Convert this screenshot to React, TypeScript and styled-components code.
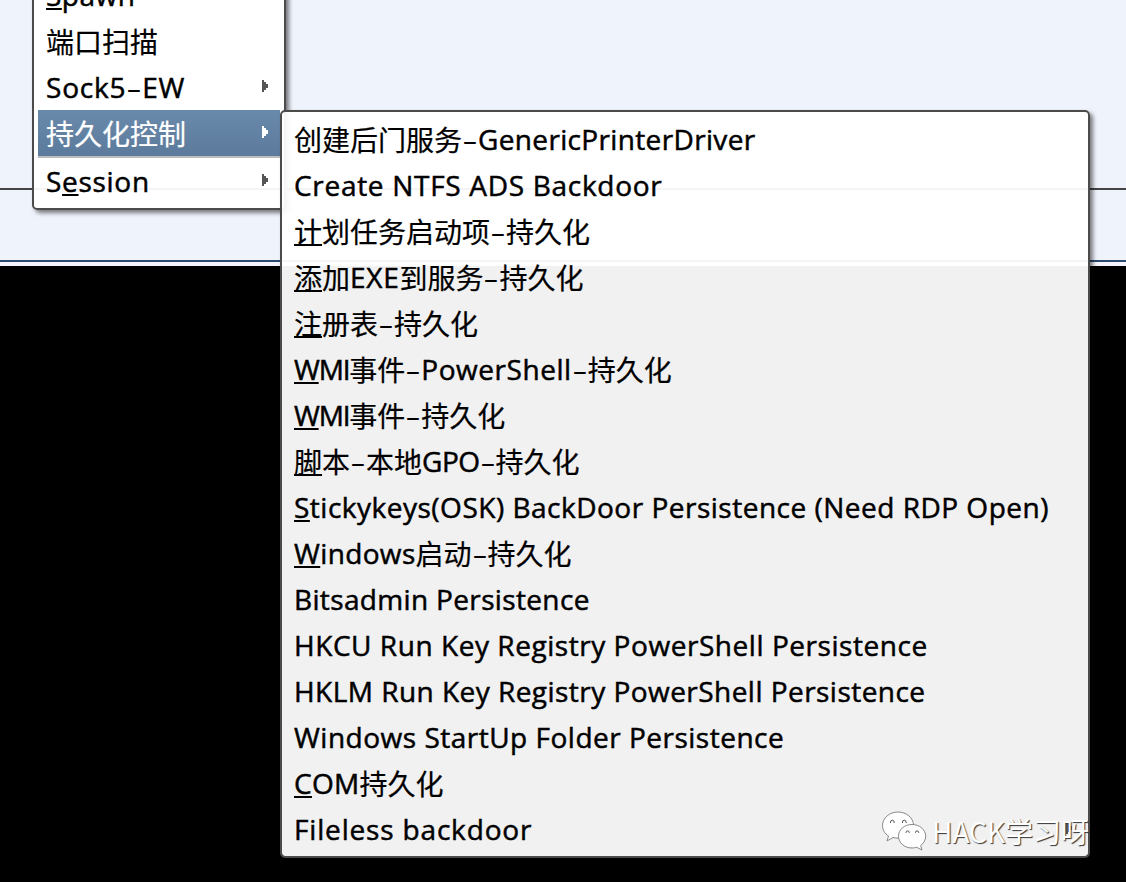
import React from "react";
import styled, { createGlobalStyle, css } from "styled-components";

const GlobalStyle = createGlobalStyle`
  * { box-sizing: border-box; }
  body { margin: 0; background: #000; overflow: hidden; }
`;

const Screen = styled.div`
  position: relative;
  width: 1126px;
  height: 882px;
  overflow: hidden;
  background: #000;
  font-family: "Open Sans", "Noto Sans CJK SC", sans-serif;
  font-size: 28px;
  color: #000;
`;

const UpperPane = styled.div`
  height: 190px;
  background: #eff3fb;
  border-bottom: 2px solid #444446;
`;

const LowerPane = styled.div`
  height: 72px;
  background: #eff3fb;
  border-bottom: 2px solid #2d4b6d;
`;

const Divider = styled.div`
  height: 4px;
  background: #f3f5fb;
`;

const Popup = styled.div<{ $x: number; $y: number; $w: number }>`
  position: absolute;
  left: ${(p) => p.$x}px;
  top: ${(p) => p.$y}px;
  width: ${(p) => p.$w}px;
  display: flex;
  flex-direction: column;
  padding: 4px;
  border: 2px solid #4b4b4b;
  border-radius: 5px;
  background: rgba(255, 255, 255, 0.945);
  background-clip: padding-box;
  box-shadow: 3px 3px 4px rgba(0, 0, 0, 0.5);
`;

const Item = styled.div<{ $selected?: boolean }>`
  display: flex;
  align-items: flex-start;
  justify-content: space-between;
  height: 46px;
  padding: 1px 12px 0 8px;
  white-space: pre;
  line-height: 44px;
  ${(p) =>
    p.$selected &&
    css`
      color: #fff;
      background: linear-gradient(#6a8aab, #5c7b9c);
      box-shadow: 0 2px 0 #bcbcbc;
      margin-bottom: 2px;
    `}
`;

const Latin = styled.span<{ $tracking: number }>`
  letter-spacing: ${(p) => p.$tracking}px;
  -webkit-text-stroke: 0.5px currentColor;
`;

const Han = styled.span`
  vertical-align: -1px;
  -webkit-text-stroke: 0.2px currentColor;
`;

const Dash = styled.span`
  display: inline-block;
  width: 16px;
  text-align: center;
  transform: scaleX(1.7);
`;

const Mnemonic = styled.span`
  text-decoration: underline 2px;
  text-underline-offset: 2px;
  text-decoration-skip-ink: none;

  ${Han} & {
    text-underline-offset: 1px;
  }
`;

const Arrow = styled.svg`
  width: 6px;
  height: 12px;
  margin-top: 15px;
  flex: none;
`;

const Watermark = styled.div`
  position: absolute;
  left: 881px;
  top: 808px;
  display: flex;
  align-items: center;
  gap: 5px;
  height: 46px;
  font-family: "Noto Sans CJK SC", sans-serif;
  font-size: 28px;
  color: #fff;
  white-space: nowrap;
  text-shadow: 1px 1px 1px #333;
`;

type Entry = {
  text: string;
  mnemonic?: number;
  /** Letter spacing of each Latin run, in order. */
  tracking?: number[];
  submenu?: boolean;
  selected?: boolean;
};

const parentItems: Entry[] = [
  { text: "Spawn", mnemonic: 0, tracking: [0.5] },
  { text: "端口扫描" },
  { text: "Sock5-EW", tracking: [0.8, 0.5], submenu: true },
  { text: "持久化控制", submenu: true, selected: true },
  { text: "Session", mnemonic: 1, tracking: [0.7], submenu: true },
];

const persistenceItems: Entry[] = [
  { text: "创建后门服务-GenericPrinterDriver", tracking: [0.35] },
  { text: "Create NTFS ADS Backdoor", tracking: [0.7] },
  { text: "计划任务启动项-持久化", mnemonic: 0 },
  { text: "添加EXE到服务-持久化", mnemonic: 0, tracking: [0.7] },
  { text: "注册表-持久化", mnemonic: 0 },
  { text: "WMI事件-PowerShell-持久化", mnemonic: 0, tracking: [-1.2, 0.55] },
  { text: "WMI事件-持久化", mnemonic: 0, tracking: [-1.2] },
  { text: "脚本-本地GPO-持久化", mnemonic: 0, tracking: [-0.5] },
  { text: "Stickykeys(OSK) BackDoor Persistence (Need RDP Open)", mnemonic: 0, tracking: [0.5] },
  { text: "Windows启动-持久化", mnemonic: 0, tracking: [0.35] },
  { text: "Bitsadmin Persistence", tracking: [0.35] },
  { text: "HKCU Run Key Registry PowerShell Persistence", tracking: [0.55] },
  { text: "HKLM Run Key Registry PowerShell Persistence", tracking: [0.46] },
  { text: "Windows StartUp Folder Persistence", tracking: [0.5] },
  { text: "COM持久化", mnemonic: 0, tracking: [0.3] },
  { text: "Fileless backdoor", tracking: [0.83], submenu: true },
];

function Label({ text, mnemonic = -1, tracking = [] }: Entry) {
  const runs = text.match(/-|[\x20-\x2c\x2e-\x7e]+|[^\x20-\x7e]+/g) ?? [];
  let start = 0;
  let latinIndex = 0;
  return (
    <span>
      {runs.map((run, i) => {
        const at = mnemonic - start;
        start += run.length;
        if (run === "-") return <Dash key={i}>-</Dash>;
        const body =
          at >= 0 && at < run.length ? (
            <>
              {run.slice(0, at)}
              <Mnemonic>{run[at]}</Mnemonic>
              {run.slice(at + 1)}
            </>
          ) : (
            run
          );
        return /^[\x20-\x7e]/.test(run) ? (
          <Latin key={i} $tracking={tracking[latinIndex++] ?? 0}>
            {body}
          </Latin>
        ) : (
          <Han key={i}>{body}</Han>
        );
      })}
    </span>
  );
}

function Menu({ items, x, y, w }: { items: Entry[]; x: number; y: number; w: number }) {
  return (
    <Popup $x={x} $y={y} $w={w}>
      {items.map((item) => (
        <Item key={item.text} $selected={item.selected}>
          <Label {...item} />
          {item.submenu && (
            <Arrow viewBox="0 0 6 12">
              <path d="M0 0h2v2h2v2h2v4h-2v2h-2v2h-2z" fill={item.selected ? "#fff" : "#555"} />
            </Arrow>
          )}
        </Item>
      ))}
    </Popup>
  );
}

export default function App() {
  return (
    <Screen>
      <GlobalStyle />
      <UpperPane />
      <LowerPane />
      <Divider />
      <Menu items={parentItems} x={32} y={-34} w={254} />
      <Menu items={persistenceItems} x={280} y={110} w={810} />
      <Watermark>
        <svg width="46" height="42" viewBox="0 0 46 42" fill="#fff" stroke="#888" strokeWidth="1">
          <path d="M17 2C8.500 2 1.500 8 1.500 15.500c0 4.500 2.300 8 6 10.500L6 31l6-3.500c2 .5 3.500.7 5.500.7 8.500 0 15-5.700 15-13C32.500 8 25.500 2 17 2z" />
          <path d="M31 14.500c-7.700 0-13.500 5.200-13.500 11.700S23.300 38 31 38c1.700 0 3.200-.3 4.700-.7L41 40l-1.300-4.500c3-2.200 5-5.500 5-9.200 0-6.500-6-11.800-13.700-11.800z" />
          <path
            d="M9.500 13v-1a1.800 1.800 0 0 1 3.600 0v1M21.500 13v-1a1.800 1.800 0 0 1 3.600 0v1M25 23v-.5a1.600 1.600 0 0 1 3.200 0v.5M34.500 23v-.5a1.600 1.600 0 0 1 3.200 0v.5"
            stroke="#555"
          />
        </svg>
        HACK学习呀
      </Watermark>
    </Screen>
  );
}
